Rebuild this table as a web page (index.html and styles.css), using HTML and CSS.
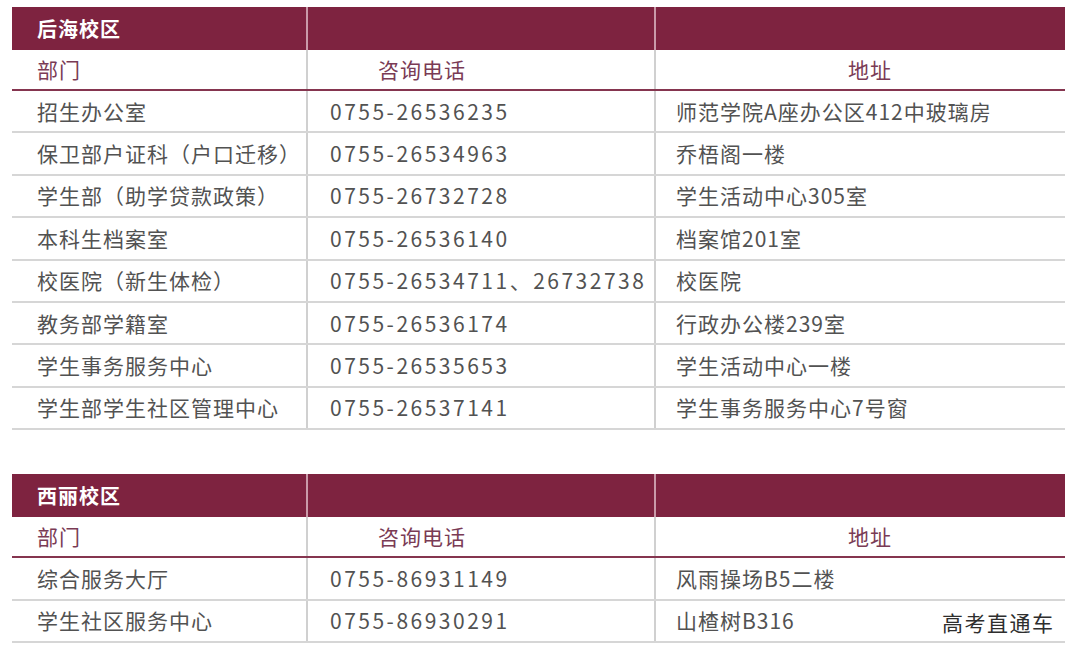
FILE: index.html
```html
<!DOCTYPE html>
<html lang="zh-CN">
<head>
<meta charset="utf-8">
<title>校区联系方式</title>
<link rel="stylesheet" href="styles.css">
</head>
<body>
<div class="page">
  <table class="contacts first">
    <colgroup><col class="c1"><col class="c2"><col class="c3"></colgroup>
    <thead>
      <tr class="campus"><th>后海校区</th><th></th><th></th></tr>
      <tr class="labels"><th>部门</th><th class="l-phone">咨询电话</th><th class="l-addr">地址</th></tr>
    </thead>
    <tbody>
      <tr><td>招生办公室</td><td class="phone">0755-26536235</td><td>师范学院A座办公区412中玻璃房</td></tr>
      <tr><td>保卫部户证科（户口迁移）</td><td class="phone">0755-26534963</td><td>乔梧阁一楼</td></tr>
      <tr><td>学生部（助学贷款政策）</td><td class="phone">0755-26732728</td><td>学生活动中心305室</td></tr>
      <tr><td>本科生档案室</td><td class="phone">0755-26536140</td><td>档案馆201室</td></tr>
      <tr><td>校医院（新生体检）</td><td class="phone">0755-26534711、26732738</td><td>校医院</td></tr>
      <tr><td>教务部学籍室</td><td class="phone">0755-26536174</td><td>行政办公楼239室</td></tr>
      <tr><td>学生事务服务中心</td><td class="phone">0755-26535653</td><td>学生活动中心一楼</td></tr>
      <tr><td>学生部学生社区管理中心</td><td class="phone">0755-26537141</td><td>学生事务服务中心7号窗</td></tr>
    </tbody>
  </table>

  <table class="contacts second">
    <colgroup><col class="c1"><col class="c2"><col class="c3"></colgroup>
    <thead>
      <tr class="campus"><th>西丽校区</th><th></th><th></th></tr>
      <tr class="labels"><th>部门</th><th class="l-phone">咨询电话</th><th class="l-addr">地址</th></tr>
    </thead>
    <tbody>
      <tr><td>综合服务大厅</td><td class="phone">0755-86931149</td><td>风雨操场B5二楼</td></tr>
      <tr><td>学生社区服务中心</td><td class="phone">0755-86930291</td><td>山楂树B316</td></tr>
    </tbody>
  </table>

  <div class="watermark">高考直通车</div>
</div>
</body>
</html>
```

FILE: styles.css
```css
html, body {
  margin: 0;
  padding: 0;
  background: #ffffff;
}

body {
  font-family: "Noto Sans CJK SC", "Noto Sans", sans-serif;
  width: 1080px;
  height: 662px;
  overflow: hidden;
}

.page {
  position: relative;
  height: 662px;
  padding: 7px 15px 0 12px;
  box-sizing: border-box;
  display: flex;
  flex-direction: column;
  gap: 44px;
}

.contacts {
  width: 1053px;
  table-layout: fixed;
  border-collapse: collapse;
  border-spacing: 0;
  font-size: 21px;
  letter-spacing: 1px;
  line-height: 1;
}

.c1 { width: 295px; }
.c2 { width: 348px; }
.c3 { width: 410px; }

.contacts th,
.contacts td {
  padding: 0;
  text-align: left;
  vertical-align: middle;
  white-space: nowrap;
}

.campus th {
  height: 43px;
  background: #7e2340;
  color: #ffffff;
  font-weight: 700;
  font-size: 20px;
  padding-left: 25px;
}

.campus th + th {
  border-left: 2px solid #c99aa9;
}

.labels th {
  height: 39px;
  border-bottom: 2px solid #85354f;
  color: #7a3b55;
  font-weight: 400;
  padding-left: 25px;
}

.labels th + th,
.contacts td + td {
  border-left: 2px solid #d0d0d0;
}

.labels th.l-phone { padding-left: 70px; }
.labels th.l-addr { padding-left: 192px; }

.contacts td {
  color: #525252;
  border-bottom: 2px solid #d6d6d6;
  padding-left: 25px;
}

.first tbody tr { height: 42.4px; }
.second tbody tr { height: 42.5px; }

.contacts td:nth-child(2) { padding-left: 22px; }
.contacts td:nth-child(3) { padding-left: 20px; }

.contacts td.phone {
  letter-spacing: 2.5px;
}

.watermark {
  position: absolute;
  left: 942px;
  top: 610px;
  font-size: 21px;
  line-height: 24px;
  letter-spacing: 1.5px;
  color: #2e2e2e;
  text-shadow: 0 0 2px #ffffff, 0 0 2px #ffffff;
}
```
